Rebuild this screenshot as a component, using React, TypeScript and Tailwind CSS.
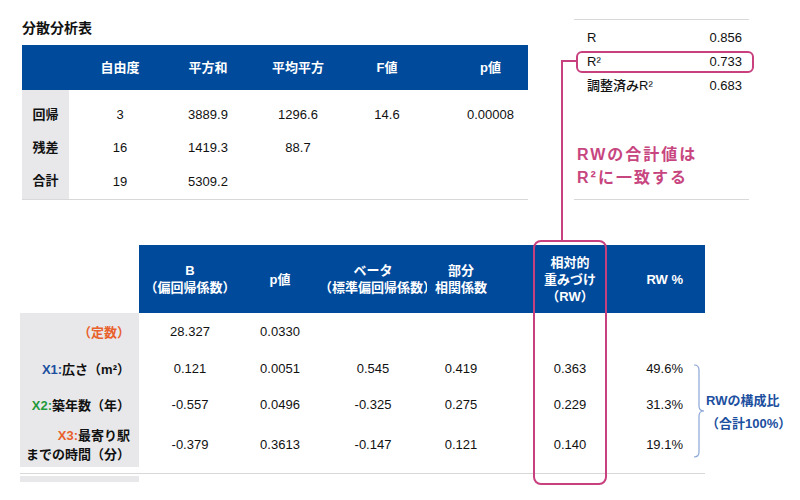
export default function App() {
  const font = { fontFamily: '"Liberation Sans", "Noto Sans CJK JP", sans-serif' };
  return (
    <div style={font} className="relative h-[500px] w-[800px] overflow-hidden bg-white text-[13px] font-medium text-[#111]">
      {/* top */}
      <div className="flex pt-[19px]">
        <div className="ml-[22px] w-[506px]">
          <h1 className="text-[14px] font-bold leading-[18px]">分散分析表</h1>
          <div className="mt-[8px]">
            <div className="grid h-[45px] grid-cols-[47px_102px_74px_106px_72px_105px] items-center bg-[#004a9c] font-bold text-white">
              <span />
              <span className="text-center">自由度</span>
              <span className="text-center">平方和</span>
              <span className="text-center">平均平方</span>
              <span className="text-center">F値</span>
              <span className="pl-[30px] text-center">p値</span>
            </div>
            <div className="grid grid-cols-[47px_102px_74px_106px_72px_105px] border-b border-[#d8d8d8]">
              <div className="row-span-3 flex flex-col bg-[#e8e8ea] pb-[2px] pt-[8px]">
                {["回帰", "残差", "合計"].map((t) => (
                  <span key={t} className="flex h-[33px] items-center justify-center font-bold">{t}</span>
                ))}
              </div>
              {[
                ["3", "3889.9", "1296.6", "14.6", "0.00008"],
                ["16", "1419.3", "88.7", "", ""],
                ["19", "5309.2", "", "", ""],
              ].map((r, i) => (
                <div key={i} className={`col-span-5 grid h-[33px] grid-cols-[102px_74px_106px_72px_105px] items-center ${i === 0 ? "mt-[8px]" : ""}`}>
                  {r.map((v, j) => (
                    <span key={j} className={`text-center ${j === 4 ? "pl-[30px]" : ""}`}>{v}</span>
                  ))}
                </div>
              ))}
            </div>
          </div>
        </div>
        <div className="ml-[46px] w-[175px] border-y border-[#d8d8d8] py-[6px]">
          {[
            ["R", "0.856"],
            ["R²", "0.733"],
            ["調整済みR²", "0.683"],
          ].map(([k, v]) => (
            <div key={k} className="flex h-[24px] items-center justify-between pl-[13px] pr-[7px]">
              <span>{k}</span>
              <span>{v}</span>
            </div>
          ))}
        </div>
      </div>

      {/* bottom table */}
      <div className="ml-[20px] mt-[45px] w-[685px]">
        <div className="grid h-[68px] grid-cols-[119px_102px_78px_108px_68px_150px_60px] items-center text-center font-bold leading-[17px] text-white">
          <span className="h-full bg-white" />
          <span className="flex h-full flex-col justify-center bg-[#004a9c]">B<br />（偏回帰係数）</span>
          <span className="flex h-full items-center justify-center bg-[#004a9c]">p値</span>
          <span className="flex h-full flex-col justify-center whitespace-nowrap bg-[#004a9c]">ベータ<br />（標準偏回帰係数）</span>
          <span className="flex h-full flex-col justify-center bg-[#004a9c]">部分<br />相関係数</span>
          <span className="flex h-full flex-col justify-center bg-[#004a9c]">相対的<br />重みづけ<br />（RW）</span>
          <span className="flex h-full items-center justify-end bg-[#004a9c] pr-[22px]">RW %</span>
        </div>
        <div className="border-b border-[#d8d8d8] pb-[6px]">
          {[
            { h: "h-[38px]", label: <><span className="text-[#e8612c]">（定数）</span></>, v: ["28.327", "0.0330", "", "", "", ""] },
            { h: "h-[36px]", label: <><span className="text-[#1c4fa0]">X1:</span>広さ（m²）</>, v: ["0.121", "0.0051", "0.545", "0.419", "0.363", "49.6%"] },
            { h: "h-[36px]", label: <><span className="text-[#1f9a3a]">X2:</span>築年数（年）</>, v: ["-0.557", "0.0496", "-0.325", "0.275", "0.229", "31.3%"] },
            { h: "h-[44px]", label: <><span className="text-[#e8612c]">X3:</span>最寄り駅<br />までの時間（分）</>, v: ["-0.379", "0.3613", "-0.147", "0.121", "0.140", "19.1%"] },
          ].map((r, i) => (
            <div key={i} className={`grid ${r.h} grid-cols-[119px_102px_78px_108px_68px_150px_60px] items-center text-center`}>
              <span className="flex h-full items-center justify-end bg-[#e8e8ea] pr-[9px] text-right font-bold leading-[19px]">
                <span>{r.label}</span>
              </span>
              {r.v.map((v, j) => (
                <span key={j} className={j === 5 ? "pr-[22px] text-right" : ""}>{v}</span>
              ))}
            </div>
          ))}
        </div>
      </div>
      <div className="absolute left-[20px] top-[476px] h-[6px] w-[119px] bg-[#e8e8ea]" />

      {/* annotations */}
      <div className="absolute left-[576px] top-[51px] h-[22px] w-[178px] rounded-[6px] border-2 border-[#c8407e]" />
      <div className="absolute left-[561px] top-[60px] h-[2px] w-[16px] bg-[#c8407e]" />
      <div className="absolute left-[561px] top-[60px] h-[181px] w-[2px] bg-[#c8407e]" />
      <div className="absolute left-[533px] top-[240px] h-[245px] w-[74px] rounded-[8px] border-2 border-[#c8407e]" />
      <div className="absolute left-[577px] top-[143px] text-[16px] font-bold leading-[23px] tracking-[2px] text-[#c8467f]">
        RWの合計値は<br />R²に一致する
      </div>

      <svg className="absolute left-[693px] top-[364px]" width="14" height="94" viewBox="0 0 14 94">
        <path d="M1 1 Q6 1 6 6 V42 Q6 47 11 47 Q6 47 6 52 V88 Q6 93 1 93" fill="none" stroke="#8aa6d6" strokeWidth="1.2" />
      </svg>
      <div className="absolute left-[706px] top-[389px] font-bold leading-[23px] text-[#1c4fa0]">
        RWの構成比<br />（合計100%）
      </div>
    </div>
  );
}
